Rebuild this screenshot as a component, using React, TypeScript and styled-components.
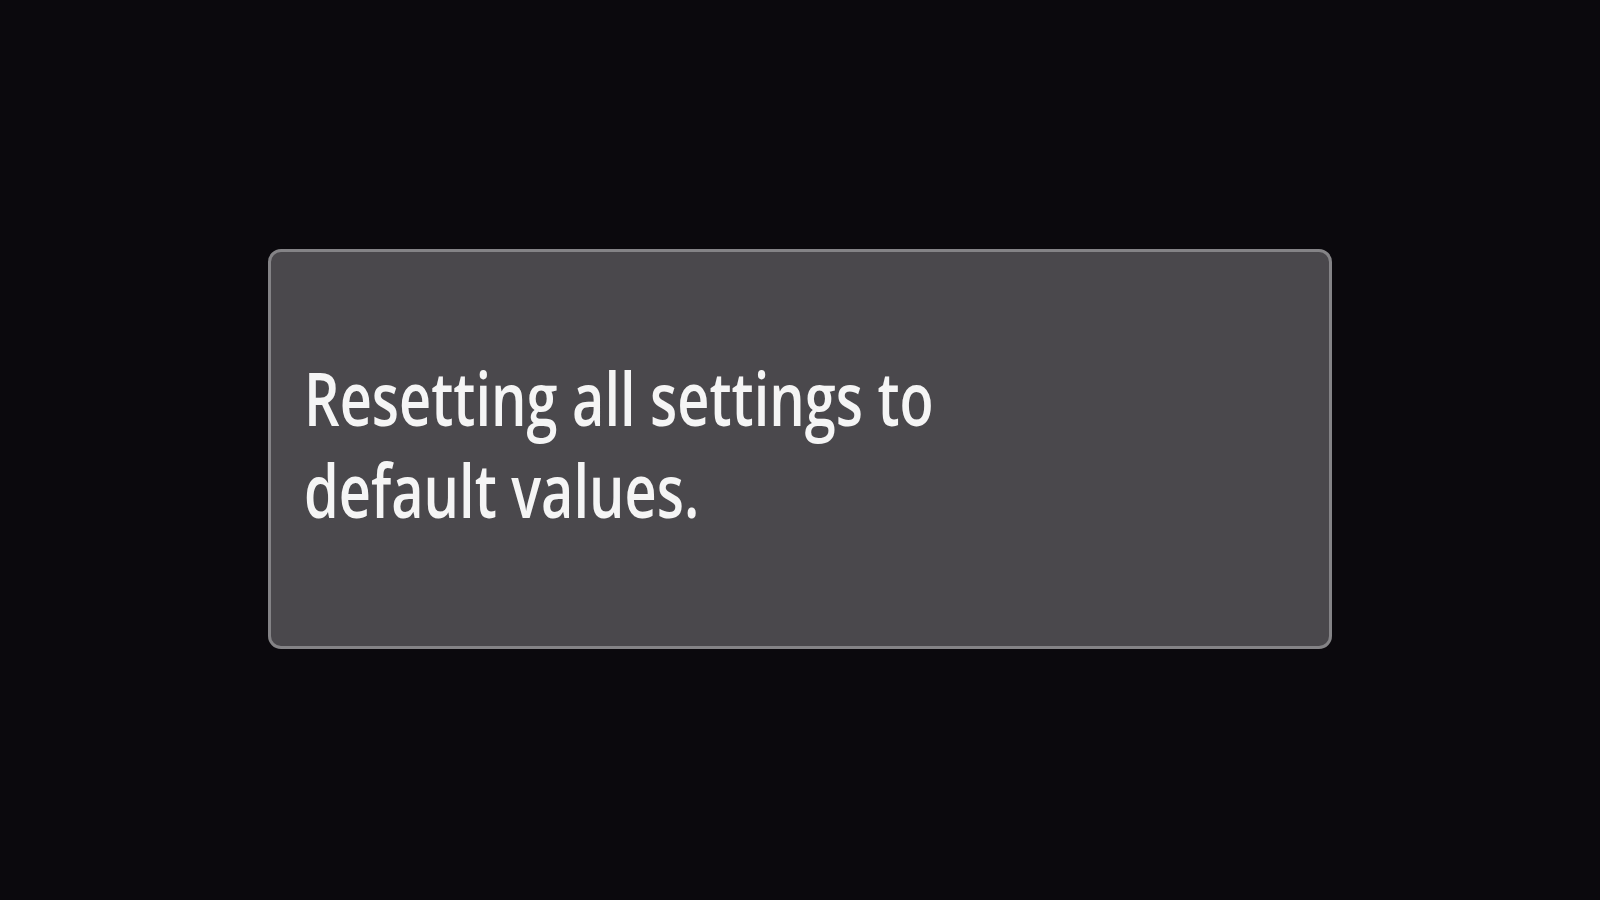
import React from 'react';
import styled, { createGlobalStyle } from 'styled-components';

const GlobalStyle = createGlobalStyle`
  html, body {
    margin: 0;
    padding: 0;
    background: #0b090d;
  }
  #root {
    height: 100vh;
  }
`;

const App = () => {
  return (
    <>
      <GlobalStyle />
      <Screen>
        <MessageBox>
          <Message>
            Resetting all settings to
            <br />
            default values.
          </Message>
        </MessageBox>
      </Screen>
    </>
  );
};

const Screen = styled.main`
  height: 100vh;
  display: flex;
  align-items: center;
  justify-content: center;
  background: #0b090d;
`;

const MessageBox = styled.section`
  box-sizing: border-box;
  width: 1064px;
  height: 400px;
  margin-bottom: 2px;
  padding: 100px 32px 0 33px;
  border: 3px solid #848386;
  border-radius: 13px;
  background: #4a484c;
`;

// the camera menu font is a narrow humanist face; squeeze Open Sans to its width
const Message = styled.p`
  display: inline-block;
  margin: 0;
  font-family: 'Open Sans', 'Noto Sans', sans-serif;
  font-weight: 600;
  font-size: 74px;
  line-height: 92px;
  color: #f5f5f5;
  white-space: nowrap;
  transform: scaleX(0.755);
  transform-origin: left top;
`;

export default App;
